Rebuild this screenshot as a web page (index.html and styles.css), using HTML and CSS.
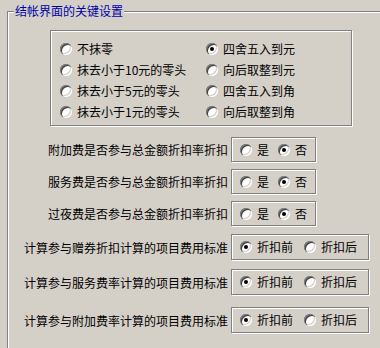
FILE: index.html
```html
<!DOCTYPE html>
<html lang="zh-CN">
<head>
  <meta charset="UTF-8">
  <title>结帐界面的关键设置</title>
  <link rel="stylesheet" href="styles.css">
</head>
<body>
  <div class="group">
    <div class="group-title">结帐界面的关键设置</div>

    <!-- 抹零 / 取整 -->
    <div class="round-box">
      <label class="opt"><span class="radio"></span>不抹零</label>
      <label class="opt"><span class="radio checked"></span>四舍五入到元</label>
      <label class="opt"><span class="radio"></span>抹去小于10元的零头</label>
      <label class="opt"><span class="radio"></span>向后取整到元</label>
      <label class="opt"><span class="radio"></span>抹去小于5元的零头</label>
      <label class="opt"><span class="radio"></span>四舍五入到角</label>
      <label class="opt"><span class="radio"></span>抹去小于1元的零头</label>
      <label class="opt"><span class="radio"></span>向后取整到角</label>
    </div>

    <div class="row first">
      <div class="row-label">附加费是否参与总金额折扣率折扣</div>
      <div class="choice yesno">
        <label class="opt"><span class="radio"></span>是</label>
        <label class="opt"><span class="radio checked"></span>否</label>
      </div>
    </div>
    <div class="row">
      <div class="row-label">服务费是否参与总金额折扣率折扣</div>
      <div class="choice yesno">
        <label class="opt"><span class="radio"></span>是</label>
        <label class="opt"><span class="radio checked"></span>否</label>
      </div>
    </div>
    <div class="row">
      <div class="row-label">过夜费是否参与总金额折扣率折扣</div>
      <div class="choice yesno">
        <label class="opt"><span class="radio"></span>是</label>
        <label class="opt"><span class="radio checked"></span>否</label>
      </div>
    </div>

    <div class="row tall">
      <div class="row-label">计算参与赠券折扣计算的项目费用标准</div>
      <div class="choice before-after">
        <label class="opt"><span class="radio checked"></span>折扣前</label>
        <label class="opt"><span class="radio"></span>折扣后</label>
      </div>
    </div>
    <div class="row tall">
      <div class="row-label">计算参与服务费率计算的项目费用标准</div>
      <div class="choice before-after">
        <label class="opt"><span class="radio checked"></span>折扣前</label>
        <label class="opt"><span class="radio"></span>折扣后</label>
      </div>
    </div>
    <div class="row tall">
      <div class="row-label">计算参与附加费率计算的项目费用标准</div>
      <div class="choice before-after">
        <label class="opt"><span class="radio checked"></span>折扣前</label>
        <label class="opt"><span class="radio"></span>折扣后</label>
      </div>
    </div>
  </div>
</body>
</html>
```

FILE: styles.css
```css
:root {
  --face: #d4d0c8;
  --shadow: #808080;
  --dark: #404040;
  --light: #ffffff;
  --title: #0000a8;
}
*, *::before, *::after { box-sizing: border-box; }
body {
  margin: 0;
  background: var(--face);
  font-family: "Noto Sans CJK SC", "Noto Sans", sans-serif;
  font-size: 12px;
  color: #000;
  overflow: hidden;
  height: 348px;
}

/* outer group box (only top + left edges are on screen) */
.group {
  position: relative;
  margin: 11px 0 0 7px;
  height: 337px;
  border-top: 1px solid var(--shadow);
  border-left: 1px solid var(--shadow);
  box-shadow: inset 1px 1px 0 var(--light);
}
.group-title {
  position: absolute;
  left: 6px; top: -8px;
  padding: 0 1px;
  line-height: 14px;
  background: var(--face);
  color: var(--title);
}

/* etched frames */
.round-box, .choice {
  border: 1px solid var(--shadow);
  box-shadow: 1px 1px 0 var(--light), inset 1px 1px 0 var(--light);
}
.round-box {
  margin: 18px 0 0 42px;
  width: 302px; height: 96px;
  padding: 7px 0 0 9px;
  display: grid;
  grid-template-columns: 146px auto;
  grid-auto-rows: 21px;
}

.opt { display: flex; align-items: center; gap: 5px; line-height: 14px; }

/* classic win radio */
.radio {
  position: relative;
  flex: none;
  width: 12px; height: 12px;
  border-radius: 50%;
  background: var(--light);
  box-shadow:
    inset 1px 1px 0 var(--shadow),
    inset 2px 2px 0 var(--dark),
    inset -1px -1px 0 var(--light),
    inset -2px -2px 0 var(--face);
}
.radio.checked::after {
  content: "";
  position: absolute;
  left: 4px; top: 4px;
  width: 4px; height: 4px;
  border-radius: 50%;
  background: #000;
}

.row { display: flex; align-items: center; height: 25px; margin-top: 7px; }
.row.first { margin-top: 11px; }
.row.tall { height: 26px; margin-top: 8px; }
.row.tall + .row.tall { margin-top: 9px; }
.row.tall + .row.tall + .row.tall { margin-top: 12px; }
.row-label { width: 223px; text-align: right; padding-right: 3px; white-space: nowrap; }

.choice {
  display: flex; align-items: center;
  height: 100%;
  padding-left: 8px;
}
.yesno { width: 85px; gap: 9px; }
.before-after { width: 138px; gap: 11px; }
```
